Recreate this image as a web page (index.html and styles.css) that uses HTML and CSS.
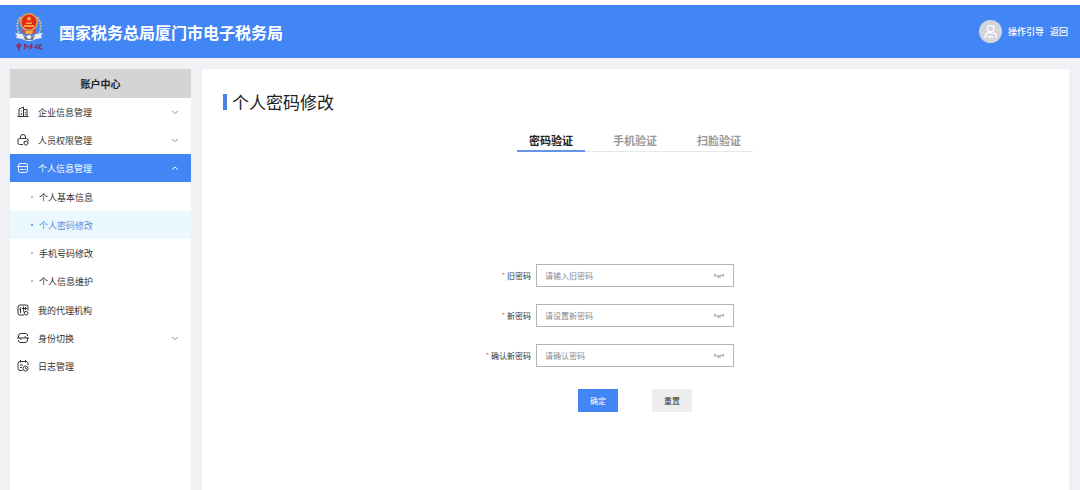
FILE: index.html
```html
<!DOCTYPE html>
<html lang="zh-CN">
<head>
    <meta charset="UTF-8">
    <meta name="viewport" content="width=device-width, initial-scale=1.0">
    <title>个人密码修改</title>
    <link rel="stylesheet" href="styles.css">
</head>
<body>
    <header>
        <div class="branding">
            <svg class="logo" viewBox="0 0 30 40" aria-hidden="true">
                <path d="M5 21 C2 15 3 9 7 5 M25 21 C28 15 27 9 23 5" fill="none" stroke="#c9bd94" stroke-width="2" stroke-dasharray="2 1"/>
                <circle cx="15" cy="10" r="9" fill="#f0a33c"/>
                <circle cx="15" cy="10" r="7.5" fill="#e02a1c"/>
                <path d="M15 4 l.8 1.8 2 .1 -1.5 1.2 .5 1.9 -1.8-1.1 -1.8 1.1 .5-1.9 -1.5-1.2 2-.1z" fill="#ffb53a"/>
                <path d="M10 13h10v2H10z M12 10.500h6v1.500h-6z" fill="#f7a53c"/>
                <path d="M8 17 Q15 21 22 17 L21 21 Q15 24 9 21z" fill="#e2452b"/>
                <path d="M11 19h8l-1 3h-6z" fill="#f4b043"/>
                <path d="M1 21 l7 1 Q15 27 22 22 l7-1 -2 3 1 2 -6 1 Q15 31 8 27 l-6-1 1-2z" fill="#e9eef2"/>
                <path d="M9 23 Q15 27 21 23 L19 28 H11z" fill="#6f7a8c"/>
                <circle cx="15" cy="25" r="2" fill="#f6f6f6"/>
                <path d="M2 34 q3-2 5-1 q-1 3-4 2 M5 31 v8 M10 33 l3 1 m-2-2 v4 l-1 1 m3-2 l2 0 M16 33 l2 3 m0-4 l-2 5 M20 35 h2 m1-3 v5 m2-4 l3 0 m-2-1 l-1 4 3 1" fill="none" stroke="#8c2f5c" stroke-width="1.500"/>
            </svg>
            <h1>国家税务总局厦门市电子税务局</h1>
        </div>
        <div class="user">
            <svg class="avatar" viewBox="0 0 24 24" aria-hidden="true">
                <circle cx="12" cy="12" r="12" fill="#d3d4dc"/>
                <path d="M9 8q0-2 2-2h2.500q2 0 2 2v2q0 2.500-3.200 2.500T9 10zM6.500 18.500V17q0-3.500 4-3.500h3.500q4 0 4 3.500v1.500M9 17.500h6" fill="none" stroke="#fff" stroke-width="1.400"/>
            </svg>
            <a href="#">操作引导</a>
            <a href="#">返回</a>
        </div>
    </header>

    <div class="container">
        <nav class="sidebar">
            <h2>账户中心</h2>
            <ul class="menu">
                <li>
                    <button type="button" class="menu-item">
                        <svg class="icon" viewBox="0 0 12 12"><path d="M.500 10.500h11M2 10.500V3l4.500-2v9.500M6.500 3.500H10v7M4.300 4.500v1M4.300 7v2M8.300 6v1M8.300 8v1"/></svg>
                        <span>企业信息管理</span>
                        <svg class="arrow" viewBox="0 0 8 8"><path d="M1 3l3 2.500L7 3"/></svg>
                    </button>
                </li>
                <li>
                    <button type="button" class="menu-item">
                        <svg class="icon" viewBox="0 0 12 12"><path d="M3.500 4.500V3a2.500 2.500 0 0 1 5 0v1.500M6 10.500H2.500q-1.500 0-1.500-1.500V6q0-1.500 1.500-1.500h7Q11 4.500 11.500 7M9 7l2 .800v1.200q0 1.500-2 2.300-2-.800-2-2.300V7.800z"/></svg>
                        <span>人员权限管理</span>
                        <svg class="arrow" viewBox="0 0 8 8"><path d="M1 3l3 2.500L7 3"/></svg>
                    </button>
                </li>
                <li>
                    <button type="button" class="menu-item open" aria-expanded="true">
                        <svg class="icon" viewBox="0 0 12 12"><rect x="1.500" y="1.500" width="9" height="9" rx="2"/><path d="M0 4.500h10.500M3.500 7.500h3M7.500 7.500h1.500"/></svg>
                        <span>个人信息管理</span>
                        <svg class="arrow" viewBox="0 0 8 8"><path d="M1 5.500L4 3l3 2.500"/></svg>
                    </button>
                    <ul class="submenu">
                        <li><a href="#">个人基本信息</a></li>
                        <li><a href="#" class="current">个人密码修改</a></li>
                        <li><a href="#">手机号码修改</a></li>
                        <li><a href="#">个人信息维护</a></li>
                    </ul>
                </li>
                <li>
                    <a href="#" class="menu-item">
                        <svg class="icon" viewBox="0 0 12 12"><path d="M7 11H3Q1 11 1 9V3q0-2 2-2h6q2 0 2 2v3.500M4 3L2.500 5.500M3.500 5v4M5 4.500h5M6.500 2.500q0 4 .500 6M8.500 3v3"/><circle cx="9.200" cy="9.200" r="1.800"/></svg>
                        <span>我的代理机构</span>
                    </a>
                </li>
                <li>
                    <button type="button" class="menu-item">
                        <svg class="icon" viewBox="0 0 12 12"><path d="M1.500 6V4q0-2.500 2.500-2.500h4q2 0 2.500 1.500v1M10.500 6v2q0 2.500-2.500 2.500H4Q2 10.500 1.500 9V8M0 6h12M7.500 4L9.500 6M2.500 6l2 2"/></svg>
                        <span>身份切换</span>
                        <svg class="arrow" viewBox="0 0 8 8"><path d="M1 3l3 2.500L7 3"/></svg>
                    </button>
                </li>
                <li>
                    <a href="#" class="menu-item">
                        <svg class="icon" viewBox="0 0 12 12"><path d="M5.500 10.500H3q-2 0-2-2v-5q0-2 2-2h6q2 0 2 2V5M3.500 0v2.500M8.500 0v2.500M3 5h3M3 7.500h2"/><circle cx="8.500" cy="8.500" r="2.500"/><path d="M8.500 7.300v1.400h1.200"/></svg>
                        <span>日志管理</span>
                    </a>
                </li>
            </ul>
        </nav>

        <main>
            <h2 class="page-title">个人密码修改</h2>

            <div class="tabs" role="tablist">
                <button type="button" role="tab" aria-selected="true" class="tab active">密码验证</button>
                <button type="button" role="tab" aria-selected="false" class="tab">手机验证</button>
                <button type="button" role="tab" aria-selected="false" class="tab">扫脸验证</button>
            </div>

            <form>
                <div class="form-row">
                    <label for="oldPassword"><i>*</i> 旧密码</label>
                    <div class="input-box">
                        <input type="password" id="oldPassword" placeholder="请输入旧密码">
                        <button type="button" class="eye" aria-label="显示旧密码">
                            <svg viewBox="0 0 12 6"><path d="M1 1q5 4 10 0M2.500 2L1.500 4M5 3v2M7 3v2M9.500 2l1 2"/></svg>
                        </button>
                    </div>
                </div>
                <div class="form-row">
                    <label for="newPassword"><i>*</i> 新密码</label>
                    <div class="input-box">
                        <input type="password" id="newPassword" placeholder="请设置新密码">
                        <button type="button" class="eye" aria-label="显示新密码">
                            <svg viewBox="0 0 12 6"><path d="M1 1q5 4 10 0M2.500 2L1.500 4M5 3v2M7 3v2M9.500 2l1 2"/></svg>
                        </button>
                    </div>
                </div>
                <div class="form-row">
                    <label for="confirmPassword"><i>*</i> 确认新密码</label>
                    <div class="input-box">
                        <input type="password" id="confirmPassword" placeholder="请确认密码">
                        <button type="button" class="eye" aria-label="显示确认密码">
                            <svg viewBox="0 0 12 6"><path d="M1 1q5 4 10 0M2.500 2L1.500 4M5 3v2M7 3v2M9.500 2l1 2"/></svg>
                        </button>
                    </div>
                </div>
                <div class="form-buttons">
                    <button type="submit" class="btn btn-primary">确定</button>
                    <button type="reset" class="btn">重置</button>
                </div>
            </form>
        </main>
    </div>
</body>
</html>
```
FILE: styles.css
```css
* {
    box-sizing: border-box;
    margin: 0;
    padding: 0;
}

/* Body styles */
body {
    font-family: "Noto Sans CJK SC", sans-serif;
    font-size: 9px;
    color: #333;
    background-color: #f1f0f4;
    min-height: 100vh;
    display: flex;
    flex-direction: column;
}

button,
input {
    font-family: inherit;
    border: none;
    background: none;
}

button {
    cursor: pointer;
}

a {
    color: inherit;
    text-decoration: none;
}

ul {
    list-style-type: none;
}

/* Header styles */
header {
    display: flex;
    justify-content: space-between;
    align-items: center;
    height: 58px;
    padding: 0 12px 0 14px;
    color: #fff;
    background-color: #4285f4;
    border-top: 5px solid #fff;
}

header h1 {
    font-size: 16px;
    line-height: 24px;
}

.branding {
    display: flex;
    align-items: center;
    gap: 15px;
}

.logo {
    width: 30px;
    height: 40px;
}

.user {
    display: flex;
    align-items: center;
    gap: 6px;
    font-weight: 500;
}

.avatar {
    width: 23px;
    height: 23px;
}

/* Page columns */
.container {
    flex: 1;
    display: flex;
    gap: 11px;
    padding: 11px 11px 0 10px;
}

/* Sidebar styles */
.sidebar {
    flex: 0 0 181px;
    background-color: #fff;
}

.sidebar h2 {
    font-size: 10px;
    line-height: 29px;
    text-align: center;
    color: #222;
    background-color: #d4d4d4;
}

.menu-item {
    display: flex;
    align-items: center;
    gap: 9px;
    width: 100%;
    height: 28px;
    padding: 0 12px 0 7px;
    font-size: 9px;
    color: #333;
    text-align: left;
}

.menu-item span {
    flex: 1;
}

.menu-item.open {
    color: #fff;
    background-color: #4285f4;
}

.icon,
.arrow {
    fill: none;
    stroke: currentColor;
}

.icon {
    width: 12px;
    height: 12px;
}

.arrow {
    width: 8px;
    height: 8px;
    stroke: #999;
}

.open .arrow {
    stroke: #fff;
}

.submenu {
    padding: 1px 0;
}

.submenu a {
    display: flex;
    align-items: center;
    gap: 6px;
    height: 28px;
    padding-left: 21px;
}

.submenu a::before {
    content: "";
    width: 2px;
    height: 2px;
    border-radius: 50%;
    background-color: #aaa;
}

.submenu .current {
    color: #5b8de0;
    background-color: #ebf9ff;
}

.submenu .current::before {
    background-color: #4285f4;
}

/* Content styles */
main {
    flex: 1;
    padding: 20px 22px 20px 21px;
    background-color: #fff;
}

.page-title {
    display: flex;
    align-items: center;
    gap: 5px;
    font-size: 17px;
    font-weight: 400;
    line-height: 26px;
    color: #222;
}

.page-title::before {
    content: "";
    width: 4px;
    height: 16px;
    background-color: #4a80e0;
}

/* Tabs */
.tabs {
    display: flex;
    gap: 16px;
    width: fit-content;
    margin: 14px auto 112px;
    border-bottom: 1px solid #e4e7ed;
}

.tab {
    height: 23px;
    padding: 0 12px;
    margin-bottom: -1px;
    font-size: 11px;
    font-weight: 700;
    color: #999;
    border-bottom: 2px solid transparent;
}

.tab.active {
    color: #222;
    border-bottom-color: #6595e4;
}

/* Form styles */
.form-row {
    display: grid;
    grid-template-columns: 1fr 198px 1fr;
    align-items: center;
    gap: 5px;
    margin-bottom: 17px;
}

.form-row label {
    font-size: 8px;
    text-align: right;
}

.form-row label i {
    font-style: normal;
    color: #e06a6a;
}

.input-box {
    display: flex;
    align-items: center;
    height: 23px;
    padding: 0 8px;
    border: 1px solid #b4b4b4;
}

.input-box:focus-within {
    border-color: #4285f4;
}

.input-box input {
    flex: 1;
    min-width: 0;
    font-size: 8px;
    outline: none;
}

.input-box input::placeholder {
    color: #888;
}

.eye {
    display: flex;
}

.eye svg {
    width: 12px;
    height: 6px;
    fill: none;
    stroke: #999;
}

.form-buttons {
    display: flex;
    justify-content: center;
    gap: 34px;
    margin-top: 22px;
}

.btn {
    width: 40px;
    height: 23px;
    font-size: 8px;
    color: #333;
    background-color: #eee;
}

.btn-primary {
    color: #fff;
    background-color: #4285f4;
}
```
